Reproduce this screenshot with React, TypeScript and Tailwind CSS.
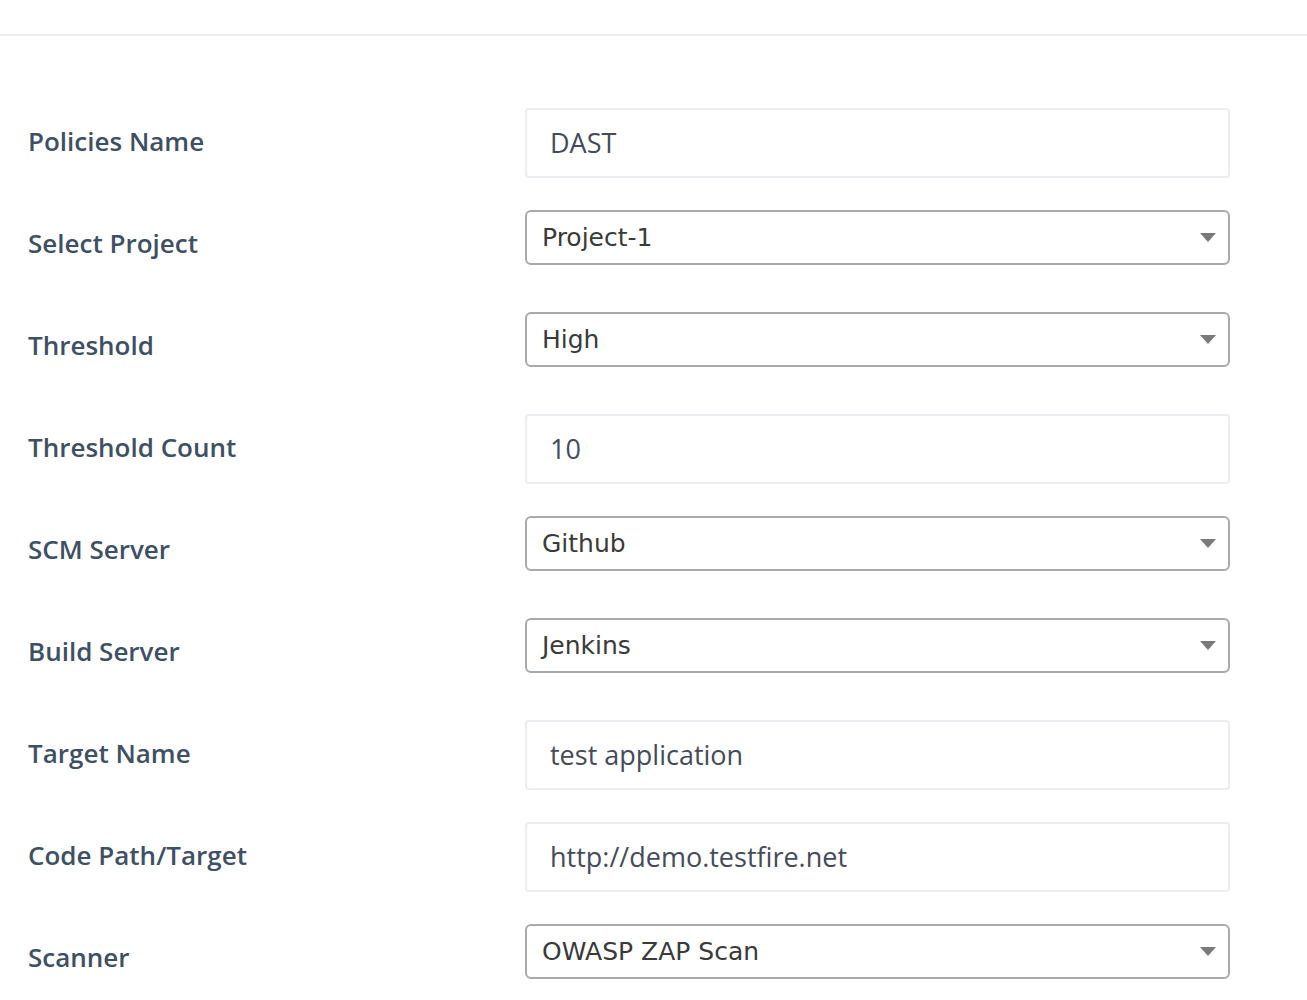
import React from 'react';

type Field = {
  label: string;
  value: string;
  kind: 'text' | 'select';
};

const fields: Field[] = [
  { label: 'Policies Name', value: 'DAST', kind: 'text' },
  { label: 'Select Project', value: 'Project-1', kind: 'select' },
  { label: 'Threshold', value: 'High', kind: 'select' },
  { label: 'Threshold Count', value: '10', kind: 'text' },
  { label: 'SCM Server', value: 'Github', kind: 'select' },
  { label: 'Build Server', value: 'Jenkins', kind: 'select' },
  { label: 'Target Name', value: 'test application', kind: 'text' },
  { label: 'Code Path/Target', value: 'http://demo.testfire.net', kind: 'text' },
  { label: 'Scanner', value: 'OWASP ZAP Scan', kind: 'select' },
];

const Caret = () => (
  <svg width="16" height="9" viewBox="0 0 16 9" className="shrink-0">
    <path d="M0 0 H16 L8 9 Z" fill="#7a7a7a" />
  </svg>
);

const FormRow = ({ field }: { field: Field }) => (
  <div className="flex items-start h-[102px]">
    <div className="w-[497px] h-[67px] flex items-center text-[26px] font-semibold text-[#3e5064] font-['Open_Sans',sans-serif]">
      {field.label}
    </div>
    {field.kind === 'text' ? (
      <div className="w-[705px] h-[70px] flex items-center px-[23px] border-2 border-[#ececf1] rounded-[4px] text-[27px] text-[#454b59] font-['Open_Sans',sans-serif]">
        {field.value}
      </div>
    ) : (
      <div className="w-[705px] h-[55px] flex items-center justify-between pl-[15px] pr-[12px] border-2 border-[#a9a9a9] rounded-[6px] text-[25px] text-[#3a3a3a] font-['DejaVu_Sans',sans-serif]">
        <span>{field.value}</span>
        <Caret />
      </div>
    )}
  </div>
);

export default function App() {
  return (
    <div className="w-[1307px] h-[1000px] bg-white overflow-hidden">
      <div className="h-[36px] border-b-2 border-[#ececf1]" />
      <div className="pl-[28px] pt-[72px]">
        {fields.map((f) => (
          <FormRow key={f.label} field={f} />
        ))}
      </div>
    </div>
  );
}
